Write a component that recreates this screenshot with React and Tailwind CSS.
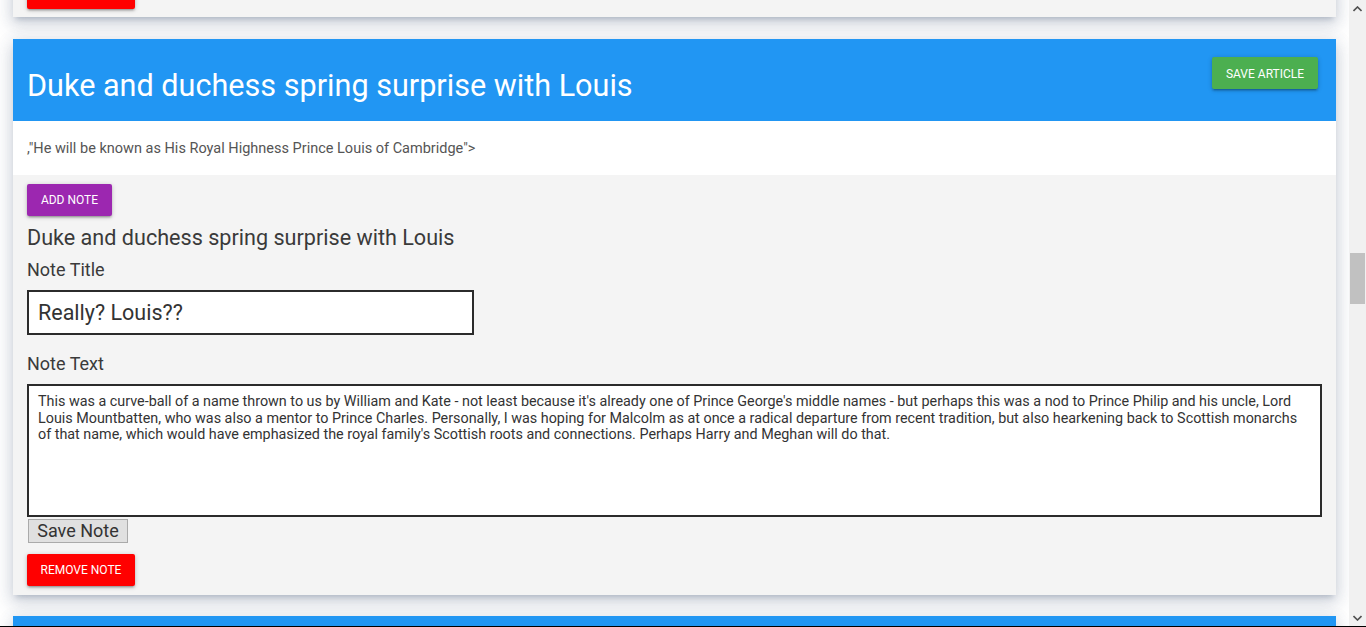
import React from "react";

const shadow = "shadow-[0_8px_17px_2px_rgba(70,90,120,0.16),0_3px_14px_2px_rgba(70,90,120,0.12),0_5px_5px_-3px_rgba(70,90,120,0.25)]";
const btnShadow = "shadow-[0_2px_2px_0_rgba(0,0,0,0.14),0_3px_1px_-2px_rgba(0,0,0,0.12),0_1px_5px_0_rgba(0,0,0,0.2)]";

const noteText =
    "This was a curve-ball of a name thrown to us by William and Kate - not least because it's already one of Prince George's middle names - but perhaps this was a nod to Prince Philip and his uncle, Lord Louis Mountbatten, who was also a mentor to Prince Charles. Personally, I was hoping for Malcolm as at once a radical departure from recent tradition, but also hearkening back to Scottish monarchs of that name, which would have emphasized the royal family's Scottish roots and connections. Perhaps Harry and Meghan will do that.";

function Scrollbar() {
    return (
        <div className="w-[17px] shrink-0 bg-[#f1f1f1] flex flex-col items-center relative">
            <div className="h-[17px] flex items-center justify-center">
                <svg width="9" height="6" viewBox="0 0 9 6"><path d="M0.5 5 L4.5 1 L8.5 5" stroke="#505050" strokeWidth="1.6" fill="none" /></svg>
            </div>
            <div className="absolute top-[253px] left-[1px] w-[15px] h-[51px] bg-[#c1c1c1]" />
            <div className="mt-auto h-[17px] flex items-center justify-center">
                <svg width="9" height="6" viewBox="0 0 9 6"><path d="M0.5 1 L4.5 5 L8.5 1" stroke="#505050" strokeWidth="1.6" fill="none" /></svg>
            </div>
        </div>
    );
}

export default function App() {
    return (
        <div className="w-[1366px] h-[627px] overflow-hidden bg-white flex flex-col" style={{ fontFamily: "Roboto, 'Noto Sans', sans-serif" }}>
            <div className="flex flex-1 min-h-0">
                {/* page content */}
                <div className="flex-1 overflow-hidden px-[13px]">
                    {/* previous card, bottom only */}
                    <div className={`bg-[#f4f4f4] ${shadow} -mt-[23px] px-[14px] pb-[8px] pt-0`}>
                        <button className={`h-8 w-[108px] bg-[#ff0000] text-white text-[12px] rounded-[2px] ${btnShadow}`}>REMOVE NOTE</button>
                    </div>

                    {/* article card */}
                    <div className={`mt-[22px] ${shadow}`}>
                        <div className="bg-[#2196f3] h-[82px] flex items-start justify-between pl-[14px] pr-[18px] pt-[18px]">
                            <h2 className="text-white text-[30.6px] leading-[36px] mt-[11px]">Duke and duchess spring surprise with Louis</h2>
                            <button className={`h-8 w-[106px] pt-[2px] bg-[#4caf50] text-white text-[12px] rounded-[2px] ${btnShadow}`}>SAVE ARTICLE</button>
                        </div>
                        <div className="bg-white h-[54px] pl-[14px] pt-[2px] flex items-center">
                            <p className="text-[14.5px] text-[#555] leading-5">,"He will be known as His Royal Highness Prince Louis of Cambridge"&gt;</p>
                        </div>
                        <div className="bg-[#f4f4f4] px-[14px] pt-[9px] pb-[9px] text-[#3a3a3a]">
                            <button className={`h-8 w-[85px] bg-[#9c27b0] text-white text-[12px] rounded-[2px] ${btnShadow}`}>ADD NOTE</button>
                            <h3 className="text-[21.6px] leading-[28px] mt-[8px]">Duke and duchess spring surprise with Louis</h3>
                            <label className="block text-[18px] leading-6 mt-[6px]">Note Title</label>
                            <input
                                className="block mt-[8px] w-[447px] h-[45px] border-2 border-[#2b2b2b] bg-white pl-[9px] text-[21.5px] text-[#333] outline-none"
                                defaultValue="Really? Louis??"
                            />
                            <label className="block text-[18px] leading-6 mt-[17px]">Note Text</label>
                            <textarea
                                className="block mt-[8px] w-full h-[133px] border-2 border-[#2b2b2b] bg-white px-[9px] pt-[8px] text-[14.35px] leading-[16.5px] text-[#333] outline-none resize-none"
                                defaultValue={noteText}
                            />
                            <button className="block mt-[2px] ml-px h-6 w-[100px] bg-[#e0e0e0] border border-[#aaa] text-[18px] leading-none text-[#333]">Save Note</button>
                            <button className={`block mt-[11px] h-8 w-[108px] bg-[#ff0000] text-white text-[12px] rounded-[2px] ${btnShadow}`}>REMOVE NOTE</button>
                        </div>
                    </div>

                    {/* next card, top only */}
                    <div className={`mt-[21px] h-[40px] bg-[#2196f3] ${shadow}`} />
                </div>
                <Scrollbar />
            </div>
            <div className="h-px bg-black shrink-0" />
        </div>
    );
}
